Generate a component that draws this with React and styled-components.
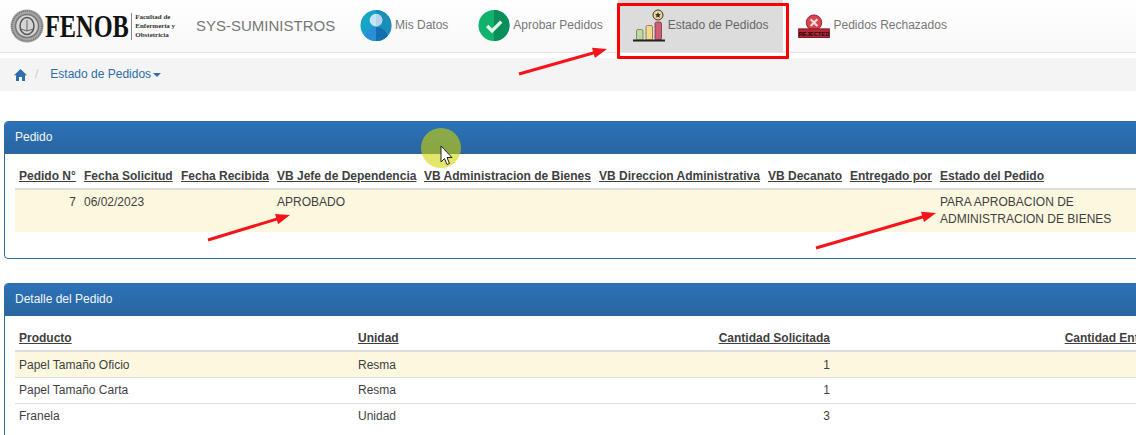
import React from 'react'
import styled, { createGlobalStyle } from 'styled-components'

const GlobalStyle = createGlobalStyle`
  html, body {
    margin: 0;
    padding: 0;
    background: #fff;
  }
  body {
    font-family: 'Liberation Sans', Arial, sans-serif;
    font-size: 12px;
    line-height: 17px;
    color: #3f3f3f;
  }
`

const Page = styled.div`
  position: relative;
  width: 1136px;
  height: 435px;
  overflow: hidden;
  background: #fff;
`

const Navbar = styled.nav`
  display: flex;
  align-items: stretch;
  height: 52px;
  border-bottom: 1px solid #e7e7e7;
  background: linear-gradient(to bottom, #fff 0, #f8f8f8 100%);
`

const Logo = styled.div`
  display: flex;
  align-items: center;
  width: 166px;
  margin-left: 10px;
`

const LogoWord = styled.span`
  font-family: 'Liberation Serif', serif;
  font-weight: bold;
  font-size: 32px;
  line-height: 32px;
  color: #111;
  margin-left: 1px;
  margin-right: -26px;
  transform: scaleX(0.76);
  transform-origin: left center;
`

const LogoSub = styled.span`
  display: block;
  margin-left: 2px;
  padding-left: 3px;
  border-left: 1px solid #888;
  font-family: 'Liberation Serif', serif;
  font-weight: bold;
  font-size: 7px;
  line-height: 9px;
  color: #333;
  white-space: nowrap;
`

const Brand = styled.div`
  display: flex;
  align-items: center;
  width: 149px;
  margin-left: 20px;
  padding-bottom: 1px;
  font-size: 15px;
  color: #777;
`

const NavItem = styled.div`
  display: flex;
  align-items: center;
  gap: 3px;
  padding: 0 15px 1px;
  font-size: 12px;
  color: ${(p) => (p.$active ? '#666' : '#777')};
  background: ${(p) => (p.$active ? '#dcdcdc' : 'transparent')};
  white-space: nowrap;
`

const Breadcrumb = styled.div`
  display: flex;
  align-items: center;
  height: 33px;
  margin-top: 5px;
  padding-left: 14px;
  background: #f4f4f4;
  color: #2f6ea8;
  font-size: 12px;
`

const Divider = styled.span`
  margin: 0 12px 0 8px;
  color: #ccc;
`

const Caret = styled.span`
  display: inline-block;
  margin-left: 2px;
  margin-top: 1px;
  border-top: 4px solid #2f6ea8;
  border-left: 4px solid transparent;
  border-right: 4px solid transparent;
`

const Panel = styled.section`
  width: 1300px;
  margin-left: 4px;
  margin-top: ${(p) => p.$top}px;
  border: 1px solid #2e6da4;
  border-radius: 4px;
  background: #fff;
`

const PanelHeading = styled.div`
  height: 32px;
  box-sizing: border-box;
  padding: 0 10px 2px;
  display: flex;
  align-items: center;
  color: #f2f6fa;
  font-size: 12px;
  border-radius: 3px 3px 0 0;
  background: linear-gradient(to bottom, #2b72b8 0, #2a659f 100%);
`

const PanelBody = styled.div`
  padding: 9px 10px ${(p) => p.$bottom}px;
`

const Table = styled.table`
  table-layout: fixed;
  border-collapse: collapse;
  width: ${(p) => p.$width}px;
`

const Th = styled.th`
  box-sizing: border-box;
  width: ${(p) => (p.$width ? `${p.$width}px` : 'auto')};
  padding: 5px 4px 3px;
  font-weight: bold;
  text-align: ${(p) => p.$align || 'left'};
  text-decoration: underline;
  white-space: nowrap;
  color: #3f3f3f;
  border-bottom: 2px solid #ddd;
`

const Td = styled.td`
  padding: ${(p) => (p.$nudge ? '5px 4px 3px' : '4px')};
  vertical-align: top;
  text-align: ${(p) => p.$align || 'left'};
  border-top: ${(p) => (p.$line ? '1px solid #ddd' : '0')};
`

const Row = styled.tr`
  background: ${(p) => (p.$highlight ? '#fcf8e0' : 'transparent')};
`

const Overlay = styled.svg`
  position: absolute;
  left: 0;
  top: 0;
  pointer-events: none;
`

const Highlight = styled.div`
  position: absolute;
  left: 617px;
  top: 3px;
  width: 172px;
  height: 56px;
  box-sizing: border-box;
  border: 3px solid #f00;
  border-radius: 1px;
`

const HomeIcon = () => (
  <svg width="13" height="12" viewBox="0 0 13 12">
    <path d="M6.500 0L13 6.300h-2V12H8V8H5v4H2V6.300H0z" fill="#2f6ea8" />
  </svg>
)

const Seal = () => (
  <svg width="34" height="34" viewBox="0 0 34 34">
    <circle cx="17" cy="17" r="16.500" fill="#a5a5a5" />
    <circle cx="17" cy="17" r="15" fill="none" stroke="#6e6e6e" strokeWidth="1.500" strokeDasharray="1 1" />
    <circle cx="17" cy="17" r="11.500" fill="#d5d5d5" stroke="#777" strokeWidth="1.500" />
    <ellipse cx="17" cy="17" rx="7" ry="8.500" fill="none" stroke="#555" strokeWidth="1.500" />
    <path d="M11 20l6 2 6-2M17 11v11" fill="none" stroke="#666" strokeWidth="1" />
  </svg>
)

const UserIcon = () => (
  <svg width="32" height="33" viewBox="0 0 33 33">
    <defs>
      <clipPath id="userClip">
        <circle cx="16.500" cy="16.500" r="16" />
      </clipPath>
    </defs>
    <circle cx="16.500" cy="16.500" r="16" fill="#16a5c6" />
    <g clipPath="url(#userClip)">
      <path d="M16.500 0a16 16 0 0 1 16 16.500v17h-16z" fill="#1b8db9" />
      <ellipse cx="16.500" cy="29" rx="12" ry="11" fill="#2b8fd8" />
      <path d="M16.500 18a12 11 0 0 1 12 11v5h-12z" fill="#136fb0" />
    </g>
    <circle cx="16.500" cy="11" r="6.500" fill="#c8e4f2" />
    <path d="M16.500 4.500a6.500 6.500 0 0 1 0 13z" fill="#b3d4ec" />
  </svg>
)

const CheckIcon = () => (
  <svg width="32" height="33" viewBox="0 0 33 33">
    <circle cx="16.500" cy="16.500" r="16" fill="#10b26c" />
    <path d="M16.500.5a16 16 0 0 1 0 32z" fill="#0b8f5a" />
    <path d="M9.500 17l5 5 9.500-9.500" fill="none" stroke="#e4f5ec" strokeWidth="3.500" />
  </svg>
)

const BarsIcon = () => (
  <svg width="32" height="33" viewBox="0 0 32 33">
    <rect x="3.500" y="20.500" width="6.500" height="10.500" rx="1.500" fill="#bcd9a0" stroke="#6d7a55" strokeWidth="0.800" />
    <rect x="13" y="16.500" width="6.500" height="14.500" rx="1.500" fill="#f0dc88" stroke="#7a7040" strokeWidth="0.800" />
    <rect x="22" y="13" width="6.500" height="18" rx="1.500" fill="#d25c74" stroke="#7a3040" strokeWidth="0.800" />
    <rect x="0" y="30.500" width="32" height="2" fill="#222" />
    <circle cx="25" cy="6" r="5" fill="#f0d890" stroke="#333" strokeWidth="1" />
    <path d="M25 3.200l.9 1.900 2 .2-1.500 1.400.4 2-1.800-1-1.800 1 .4-2-1.500-1.400 2-.2z" fill="#333" />
  </svg>
)

const RejectedIcon = () => (
  <svg width="32" height="24" viewBox="0 0 33 25">
    <circle cx="16.500" cy="9" r="8" fill="#d9454f" stroke="#8e1f2a" strokeWidth="1" />
    <path d="M13 5.500l7 7M20 5.500l-7 7" stroke="#f6dcdc" strokeWidth="2.200" />
    <rect x="0.500" y="15.500" width="32" height="9" fill="#b52a38" stroke="#7e1722" strokeWidth="1" />
    <text x="16.500" y="22.500" textAnchor="middle" fontFamily="Liberation Sans" fontWeight="bold" fontSize="6" fill="#1c0508">REJECTED</text>
  </svg>
)

const Arrow = ({ x1, y1, x2, y2 }) => {
  // punta de flecha calculada sobre la direccion de la linea
  const a = Math.atan2(y2 - y1, x2 - x1)
  const back = (r, off) => `${x2 - r * Math.cos(a + off)},${y2 - r * Math.sin(a + off)}`
  return (
    <g>
      <line x1={x1} y1={y1} x2={x2 - 8 * Math.cos(a)} y2={y2 - 8 * Math.sin(a)} stroke="#f5141a" strokeWidth="3" />
      <polygon points={`${x2},${y2} ${back(15, 0.36)} ${back(15, -0.36)}`} fill="#f5141a" />
    </g>
  )
}

const App = () => (
  <Page>
    <GlobalStyle />
    <Navbar>
      <Logo>
        <Seal />
        <LogoWord>FENOB</LogoWord>
        <LogoSub>
          Facultad de
          <br />
          Enfermería y
          <br />
          Obstetricia
        </LogoSub>
      </Logo>
      <Brand>SYS-SUMINISTROS</Brand>
      <NavItem>
        <UserIcon />
        Mis Datos
      </NavItem>
      <NavItem>
        <CheckIcon />
        Aprobar Pedidos
      </NavItem>
      <NavItem $active>
        <BarsIcon />
        Estado de Pedidos
      </NavItem>
      <NavItem>
        <RejectedIcon />
        Pedidos Rechazados
      </NavItem>
    </Navbar>

    <Breadcrumb>
      <HomeIcon />
      <Divider>/</Divider>
      Estado de Pedidos
      <Caret />
    </Breadcrumb>

    <Panel $top={30}>
      <PanelHeading>Pedido</PanelHeading>
      <PanelBody $bottom={26}>
        <Table $width={1131}>
          <thead>
            <tr>
              <Th $width={65}>Pedido N°</Th>
              <Th $width={97}>Fecha Solicitud</Th>
              <Th $width={96}>Fecha Recibida</Th>
              <Th $width={147}>VB Jefe de Dependencia</Th>
              <Th $width={175}>VB Administracion de Bienes</Th>
              <Th $width={169}>VB Direccion Administrativa</Th>
              <Th $width={82}>VB Decanato</Th>
              <Th $width={90}>Entregado por</Th>
              <Th $width={210}>Estado del Pedido</Th>
            </tr>
          </thead>
          <tbody>
            <Row $highlight>
              <Td $align="right">7</Td>
              <Td>06/02/2023</Td>
              <Td />
              <Td>APROBADO</Td>
              <Td />
              <Td />
              <Td />
              <Td />
              <Td>PARA APROBACION DE ADMINISTRACION DE BIENES</Td>
            </Row>
          </tbody>
        </Table>
      </PanelBody>
    </Panel>

    <Panel $top={24}>
      <PanelHeading>Detalle del Pedido</PanelHeading>
      <PanelBody $bottom={10}>
        <Table $width={1280}>
          <thead>
            <tr>
              <Th $width={339}>Producto</Th>
              <Th $width={250}>Unidad</Th>
              <Th $width={230} $align="right">Cantidad Solicitada</Th>
              <Th $width={348} $align="right">Cantidad Entregada</Th>
              <Th />
            </tr>
          </thead>
          <tbody>
            <Row $highlight>
              <Td $nudge>Papel Tamaño Oficio</Td>
              <Td $nudge>Resma</Td>
              <Td $nudge $align="right">1</Td>
              <Td />
              <Td />
            </Row>
            <Row>
              <Td $line>Papel Tamaño Carta</Td>
              <Td $line>Resma</Td>
              <Td $line $align="right">1</Td>
              <Td $line />
              <Td $line />
            </Row>
            <Row>
              <Td $line>Franela</Td>
              <Td $line>Unidad</Td>
              <Td $line $align="right">3</Td>
              <Td $line />
              <Td $line />
            </Row>
          </tbody>
        </Table>
      </PanelBody>
    </Panel>

    <Highlight />
    <Overlay width="1136" height="435" viewBox="0 0 1136 435">
      <Arrow x1={519} y1={74} x2={607} y2={49} />
      <Arrow x1={208} y1={240} x2={290} y2={215} />
      <Arrow x1={816} y1={248} x2={936} y2={213} />
      <circle cx="441" cy="148" r="20" fill="rgb(209,212,0)" fillOpacity="0.585" />
      <path d="M441 146v16l3.500-3.500 2.500 6 2.500-1-2.500-6h5z" fill="#fff" stroke="#222" strokeWidth="1" />
    </Overlay>
  </Page>
)

export default App
